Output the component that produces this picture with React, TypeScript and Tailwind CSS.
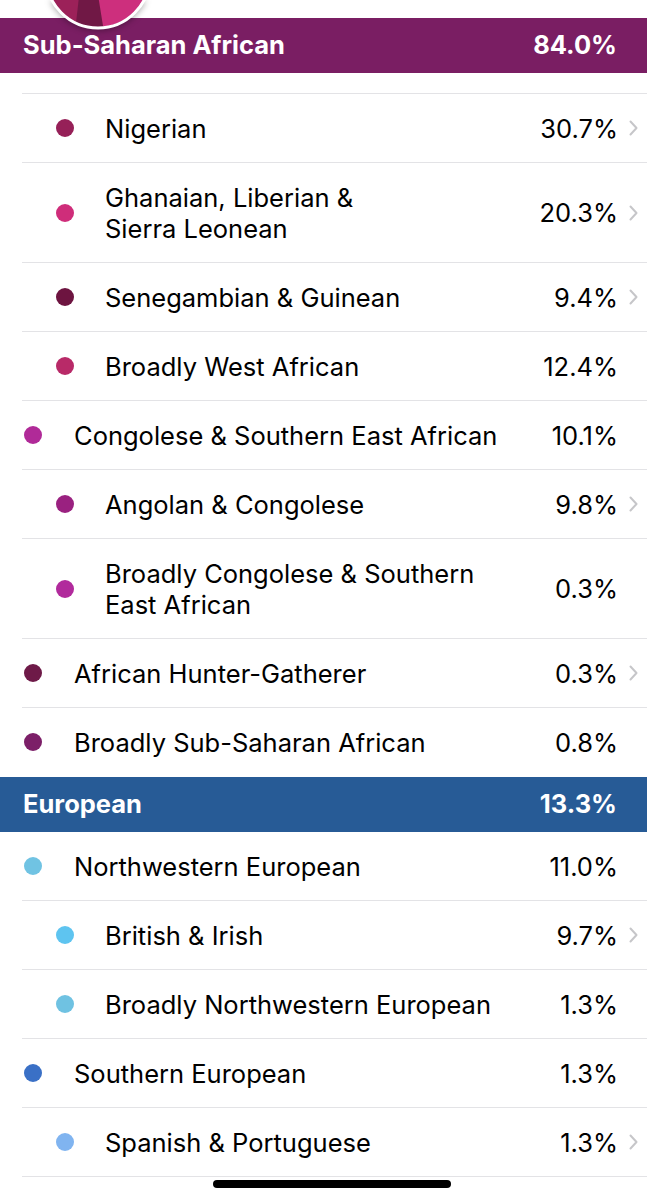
import React from 'react'

type Row = {
  name: string[]
  pct: string
  color: string
  sub?: boolean
  chevron?: boolean
}

type Section = {
  title: string
  pct: string
  bg: string
  spacer?: boolean
  rows: Row[]
}

const sections: Section[] = [
  {
    title: 'Sub-Saharan African',
    pct: '84.0%',
    bg: 'bg-[#7a1e63]',
    spacer: true,
    rows: [
      { name: ['Nigerian'], pct: '30.7%', color: '#962058', sub: true, chevron: true },
      { name: ['Ghanaian, Liberian &', 'Sierra Leonean'], pct: '20.3%', color: '#cf2d7a', sub: true, chevron: true },
      { name: ['Senegambian & Guinean'], pct: '9.4%', color: '#6d1440', sub: true, chevron: true },
      { name: ['Broadly West African'], pct: '12.4%', color: '#b82a68', sub: true },
      { name: ['Congolese & Southern East African'], pct: '10.1%', color: '#b02a98' },
      { name: ['Angolan & Congolese'], pct: '9.8%', color: '#9a2180', sub: true, chevron: true },
      { name: ['Broadly Congolese & Southern', 'East African'], pct: '0.3%', color: '#b12a9c', sub: true },
      { name: ['African Hunter-Gatherer'], pct: '0.3%', color: '#6e1a48', chevron: true },
      { name: ['Broadly Sub-Saharan African'], pct: '0.8%', color: '#7c1f68' },
    ],
  },
  {
    title: 'European',
    pct: '13.3%',
    bg: 'bg-[#275b96]',
    rows: [
      { name: ['Northwestern European'], pct: '11.0%', color: '#70c3e3' },
      { name: ['British & Irish'], pct: '9.7%', color: '#5ec4f0', sub: true, chevron: true },
      { name: ['Broadly Northwestern European'], pct: '1.3%', color: '#6fc2e2', sub: true },
      { name: ['Southern European'], pct: '1.3%', color: '#3a70c6' },
      { name: ['Spanish & Portuguese'], pct: '1.3%', color: '#80b4f0', sub: true, chevron: true },
    ],
  },
]

const Chevron = () => (
  <svg width="9" height="16" viewBox="0 0 9 16" fill="none">
    <polyline points="1.5,1.5 7.5,8 1.5,14.5" stroke="#c6c6c9" strokeWidth="2" strokeLinecap="round" strokeLinejoin="round" />
  </svg>
)

const Donut = () => (
  <svg width="112" height="32" viewBox="0 0 112 32" className="absolute left-[42px] top-0 z-10 drop-shadow-[0_1px_3px_rgba(0,0,0,0.35)]">
    <defs>
      <clipPath id="donut-clip">
        <circle cx="56" cy="-24" r="51" />
      </clipPath>
    </defs>
    <g clipPath="url(#donut-clip)">
      <rect x="0" y="-80" width="112" height="112" fill="#cd2f7d" />
      <polygon points="0,-30 52,-30 33,32 0,32" fill="#9c2159" />
      <polygon points="40,-30 52,-30 62,32 33,32" fill="#701845" />
    </g>
    <circle cx="56" cy="-24" r="52" fill="none" stroke="#ffffff" strokeWidth="3" />
  </svg>
)

const ListRow = ({ row, last }: { row: Row; last: boolean }) => (
  <div className={`ml-[22px] flex items-center py-[18.5px] ${last ? 'pb-[19.5px]' : 'border-b border-[#e3e3e6]'}`}>
    <div
      className={`h-[18px] w-[18px] shrink-0 rounded-full ${row.sub ? 'ml-[34px]' : 'ml-[2px]'}`}
      style={{ backgroundColor: row.color }}
    />
    <div className={`flex-1 text-[25.5px] leading-[31px] text-black ${row.sub ? 'ml-[31px]' : 'ml-[32px]'}`}>
      {row.name.map((line) => (
        <div key={line}>{line}</div>
      ))}
    </div>
    <div className="text-[25.5px] leading-[31px] text-black">{row.pct}</div>
    <div className="flex w-[29px] shrink-0 items-center pl-[11px]">{row.chevron && <Chevron />}</div>
  </div>
)

export default function App() {
  return (
    <div className="relative min-h-[1200px] w-[647px] overflow-hidden bg-white font-['Inter','Liberation_Sans',sans-serif]">
      <Donut />
      <div className="h-[18px]" />
      {sections.map((s) => (
        <div key={s.title}>
          <div className={`flex h-[55px] items-center justify-between pl-[23px] pr-[30px] text-[25.5px] font-bold text-white ${s.bg}`}>
            <span>{s.title}</span>
            <span>{s.pct}</span>
          </div>
          {s.spacer && <div className="ml-[22px] h-[21px] border-b border-[#e3e3e6]" />}
          {s.rows.map((r, i) => (
            <ListRow key={r.name.join(' ')} row={r} last={i === s.rows.length - 1 && s.title !== 'European'} />
          ))}
        </div>
      ))}
      <div className="absolute bottom-[12px] left-[213px] h-[8px] w-[238px] rounded-full bg-black" />
    </div>
  )
}
